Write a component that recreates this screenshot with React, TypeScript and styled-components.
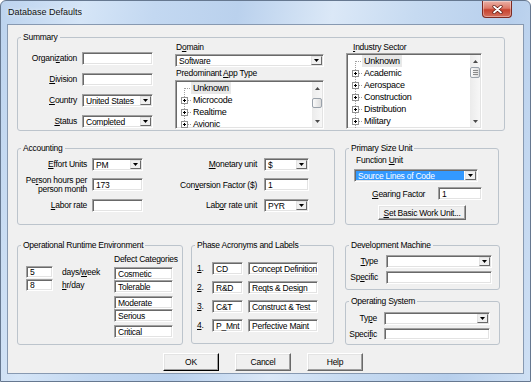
import React from 'react'
import styled, { createGlobalStyle, css } from 'styled-components'

const FONT = `'Liberation Sans', Arial, sans-serif`

const GlobalStyle = createGlobalStyle`
  html, body {
    margin: 0;
    padding: 0;
    background: #ffffff;
  }
  body {
    font-family: ${FONT};
    font-size: 8.5px;
    letter-spacing: -0.25px;
    color: #000;
  }
`

const sunken = css`
  box-sizing: border-box;
  border: 1px solid;
  border-color: #a0a0a0 #ffffff #ffffff #a0a0a0;
  box-shadow: inset 1px 1px 0 #696969, inset -1px -1px 0 #e3e3e3;
  background: #ffffff;
`

const Window = styled.div`
  box-sizing: border-box;
  width: 531px;
  height: 382px;
  display: flex;
  flex-direction: column;
  border: 1px solid #667890;
  border-radius: 6px 6px 0 0;
  overflow: hidden;
  background: linear-gradient(
    100deg,
    #bcd3ee 0%,
    #d5e5f7 14%,
    #c3d8f1 26%,
    #bad1ed 40%,
    #dbe8f7 56%,
    #c6daf1 70%,
    #b7cfec 86%,
    #cfe0f4 100%
  );
`

const TitleBar = styled.div`
  height: 23px;
  display: flex;
  align-items: flex-start;
`

const Title = styled.span`
  flex: 1;
  margin: 6px 0 0 7px;
  font-family: 'Liberation Sans', Arial, sans-serif;
  font-size: 9px;
  letter-spacing: 0;
  line-height: 11px;
  color: #111;
  text-shadow: 0 0 4px rgba(255, 255, 255, 0.9);
`

const CloseButton = styled.div`
  box-sizing: border-box;
  width: 30px;
  height: 17px;
  margin-right: 18px;
  display: flex;
  align-items: center;
  justify-content: center;
  border: 1px solid #7d2a22;
  border-top: none;
  border-radius: 0 0 4px 4px;
  background: linear-gradient(180deg, #eab1a7 0%, #dd7a69 45%, #c7432f 55%, #d4705e 100%);
  box-shadow: inset 0 0 0 1px rgba(255, 255, 255, 0.35);
`

const Client = styled.div`
  flex: 1;
  min-height: 0;
  margin: 0 6px 7px;
  border: 1px solid #8799b1;
  background: #f0f0f0;
  padding: 7px 0 0 9px;
  display: flex;
  flex-direction: column;
`

const Row = styled.div<{ $top?: number; $gap?: number }>`
  display: flex;
  align-items: flex-start;
  margin-top: ${({ $top }) => $top ?? 0}px;
  gap: ${({ $gap }) => $gap ?? 0}px;
`

const Stack = styled.div<{ $gap?: number }>`
  display: flex;
  flex-direction: column;
  gap: ${({ $gap }) => $gap ?? 0}px;
`

const Group = styled.fieldset<{ $w: number; $h: number }>`
  box-sizing: border-box;
  width: ${({ $w }) => $w}px;
  height: ${({ $h }) => $h}px;
  margin: 0;
  padding: 0;
  min-width: 0;
  border: 1px solid #bcc4cc;
  border-radius: 3px;
`

const Legend = styled.legend`
  margin-left: 3px;
  padding: 0 2px;
  line-height: 10px;
  white-space: nowrap;
`

const Caption = styled.div<{ $indent?: number; $top?: number }>`
  line-height: 10px;
  padding-left: ${({ $indent }) => $indent ?? 0}px;
  margin-top: ${({ $top }) => $top ?? 0}px;
  white-space: nowrap;
`

const FieldLabel = styled.div<{ $pr?: number; $lh?: number }>`
  align-self: center;
  text-align: right;
  white-space: nowrap;
  padding-right: ${({ $pr }) => $pr ?? 0}px;
  line-height: ${({ $lh }) => $lh ?? 13}px;
`

const TextBox = styled.div<{ $w?: number; $h?: number }>`
  ${sunken}
  width: ${({ $w }) => ($w ? `${$w}px` : '100%')};
  height: ${({ $h }) => $h ?? 13}px;
  padding: 0 2px 0 3px;
  display: flex;
  align-items: center;
  white-space: nowrap;
  overflow: hidden;
`

const Combo = styled.div<{ $w?: number; $top?: number; $left?: number }>`
  ${sunken}
  width: ${({ $w }) => ($w ? `${$w}px` : '100%')};
  height: 13px;
  margin-top: ${({ $top }) => $top ?? 0}px;
  margin-left: ${({ $left }) => $left ?? 0}px;
  padding: 1px;
  display: flex;
`

const ComboValue = styled.div<{ $selected?: boolean }>`
  flex: 1;
  display: flex;
  align-items: center;
  padding-left: 2px;
  margin-right: 1px;
  white-space: nowrap;
  overflow: hidden;
  background: ${({ $selected }) => ($selected ? '#3399ff' : 'transparent')};
  color: ${({ $selected }) => ($selected ? '#ffffff' : '#000')};
`

const DropButton = styled.div`
  box-sizing: border-box;
  width: 11px;
  display: flex;
  align-items: center;
  justify-content: center;
  border: 1px solid;
  border-color: #e3e3e3 #696969 #696969 #e3e3e3;
  background: #f0f0f0;
`

const ListBox = styled.div<{ $h: number; $top?: number }>`
  ${sunken}
  height: ${({ $h }) => $h}px;
  margin-top: ${({ $top }) => $top ?? 0}px;
  padding: 0 1px;
  display: flex;
  overflow: hidden;
`

const TreeList = styled.div<{ $pad: number }>`
  flex: 1;
  overflow: hidden;
  padding-top: ${({ $pad }) => $pad}px;
`

const TreeRow = styled.div`
  display: flex;
  align-items: center;
  height: 12px;
  white-space: nowrap;
`

const TreeText = styled.span<{ $focus?: boolean }>`
  padding: 0 2px;
  line-height: 12px;
  font-size: 9px;
  background: ${({ $focus }) => ($focus ? '#e8e8e8' : 'transparent')};
`

const ScrollBar = styled.div`
  width: 10px;
  margin: 1px 0;
  display: flex;
  flex-direction: column;
  background: linear-gradient(90deg, #ebebeb, #f7f7f7);
`

const ScrollArrow = styled.div`
  height: 12px;
  display: flex;
  align-items: center;
  justify-content: center;
`

const ScrollThumb = styled.div<{ $top: number; $h: number }>`
  box-sizing: border-box;
  margin-top: ${({ $top }) => $top}px;
  height: ${({ $h }) => $h}px;
  border: 1px solid #9aa2ab;
  border-radius: 2px;
  background: linear-gradient(90deg, #fafafa, #dcdcdc);
  display: flex;
  align-items: center;
  justify-content: center;
`

const ScrollTrack = styled.div`
  flex: 1;
`

const PushButton = styled.div<{ $w: number; $h: number; $default?: boolean }>`
  box-sizing: border-box;
  width: ${({ $w }) => $w}px;
  height: ${({ $h }) => $h}px;
  display: flex;
  align-items: center;
  justify-content: center;
  background: #f0f0f0;
  border: 1px solid;
  border-color: #ffffff ${({ $default }) => ($default ? '#000' : '#696969')}
    ${({ $default }) => ($default ? '#000' : '#696969')} #ffffff;
  box-shadow: inset -1px -1px 0 #a0a0a0, inset 1px 1px 0 #e3e3e3;
  white-space: nowrap;
`

/* Summary */
const SummaryGrid = styled.div`
  display: grid;
  grid-template-columns: 135px 149px 136px;
  column-gap: 22px;
`

const LabeledFields = styled.div<{ $cols: string; $rows: string; $rowGap: number; $top: number }>`
  display: grid;
  grid-template-columns: ${({ $cols }) => $cols};
  grid-template-rows: ${({ $rows }) => $rows};
  row-gap: ${({ $rowGap }) => $rowGap}px;
  column-gap: 0;
  padding-top: ${({ $top }) => $top}px;
`

/* Primary size unit */
const SizeBody = styled.div`
  display: flex;
  flex-direction: column;
  padding-top: 2px;
`

const GearRow = styled.div`
  display: flex;
  align-items: center;
  height: 13px;
  margin-top: 5px;
  padding: 0 16px 0 26px;
`

const Push = styled.div`
  margin-top: 5px;
  align-self: center;
`

/* Runtime environment */
const RuntimeBody = styled.div`
  display: flex;
`

const RuntimeLeft = styled.div`
  width: 96px;
  padding: 16px 0 0 8px;
  box-sizing: border-box;
  display: flex;
  flex-direction: column;
  gap: 1px;
`

const RuntimeRow = styled.div`
  display: flex;
  align-items: center;
  gap: 9px;
`

const DefectCol = styled.div`
  width: 59px;
  display: flex;
  flex-direction: column;
`

const DefectStack = styled.div<{ $top: number }>`
  display: flex;
  flex-direction: column;
  margin-top: ${({ $top }) => $top}px;
`

/* Phases */
const PhaseGrid = styled.div`
  display: grid;
  grid-template-columns: 10px 31px 70px;
  grid-auto-rows: 13px;
  column-gap: 5px;
  row-gap: 6px;
  padding: 12px 0 0 5px;
`

const PhaseNum = styled.div`
  align-self: center;
  line-height: 13px;
`

const ButtonBar = styled.div`
  display: flex;
  gap: 16px;
  margin-top: 8px;
  padding-left: 146px;
`

const Arrow = ({ up }: { up?: boolean }) => (
  <svg width="5" height="3" viewBox="0 0 5 3">
    <path d={up ? 'M0 3 L2.5 0 L5 3 Z' : 'M0 0 L5 0 L2.5 3 Z'} fill="#4a4a4a" />
  </svg>
)

const DropArrow = () => (
  <svg width="5" height="3" viewBox="0 0 5 3">
    <path d="M0 0 L5 0 L2.5 3 Z" fill="#000" />
  </svg>
)

const Grip = () => (
  <svg width="5" height="5" viewBox="0 0 5 5" shapeRendering="crispEdges">
    <path d="M0 0.5 H5 M0 2.5 H5 M0 4.5 H5" stroke="#8a8a8a" />
  </svg>
)

const Connector = ({ root }: { root?: boolean }) => (
  <svg width="14" height="12" viewBox="0 0 14 12" shapeRendering="crispEdges">
    <line x1="7.5" y1={root ? 6 : 0} x2="7.5" y2="12" stroke="#a0a0a0" strokeDasharray="1 1" />
    <line x1={root ? 7.5 : 11} y1="6.5" x2="14" y2="6.5" stroke="#a0a0a0" strokeDasharray="1 1" />
    {!root && (
      <>
        <rect x="4.5" y="3.5" width="6" height="6" fill="#fff" stroke="#919191" />
        <line x1="6" y1="6.5" x2="9" y2="6.5" stroke="#000" />
        <line x1="7.5" y1="5" x2="7.5" y2="8" stroke="#000" />
      </>
    )}
  </svg>
)

const ComboBox = ({
  value,
  w,
  top,
  left,
  selected,
}: {
  value?: string
  w?: number
  top?: number
  left?: number
  selected?: boolean
}) => (
  <Combo $w={w} $top={top} $left={left}>
    <ComboValue $selected={selected}>{value}</ComboValue>
    <DropButton>
      <DropArrow />
    </DropButton>
  </Combo>
)

const TreeBox = ({
  items,
  h,
  top,
  pad,
  thumbTop,
  thumbH,
  grip,
}: {
  items: string[]
  h: number
  top?: number
  pad: number
  thumbTop: number
  thumbH: number
  grip?: boolean
}) => (
  <ListBox $h={h} $top={top}>
    <TreeList $pad={pad}>
      {items.map((item, idx) => (
        <TreeRow key={item}>
          <Connector root={idx === 0} />
          <TreeText $focus={idx === 0}>{item}</TreeText>
        </TreeRow>
      ))}
    </TreeList>
    <ScrollBar>
      <ScrollArrow>
        <Arrow up />
      </ScrollArrow>
      <ScrollThumb $top={thumbTop} $h={thumbH}>
        {grip && <Grip />}
      </ScrollThumb>
      <ScrollTrack />
      <ScrollArrow>
        <Arrow />
      </ScrollArrow>
    </ScrollBar>
  </ListBox>
)

const domainItems = ['Unknown', 'Microcode', 'Realtime', 'Avionic']
const industryItems = [
  'Unknown',
  'Academic',
  'Aerospace',
  'Construction',
  'Distribution',
  'Military',
  'Electronics',
]

const phases = [
  { n: '1', acr: 'CD', label: 'Concept Definition' },
  { n: '2', acr: 'R&D', label: 'Reqts & Design' },
  { n: '3', acr: 'C&T', label: 'Construct & Test' },
  { n: '4', acr: 'P_Mnt', label: 'Perfective Maint' },
]

export default function App() {
  return (
    <>
      <GlobalStyle />
      <Window>
        <TitleBar>
          <Title>Database Defaults</Title>
          <CloseButton>
            <svg width="11" height="9" viewBox="0 0 11 9">
              <path d="M2 1.5 L9 7.5 M9 1.5 L2 7.5" stroke="#5b1810" strokeWidth="3.2" strokeLinecap="round" />
              <path d="M2 1.5 L9 7.5 M9 1.5 L2 7.5" stroke="#ffffff" strokeWidth="1.8" strokeLinecap="round" />
            </svg>
          </CloseButton>
        </TitleBar>

        <Client>
          <Group $w={488} $h={99}>
            <Legend>Summary</Legend>
            <SummaryGrid>
              <LabeledFields $cols="64px 71px" $rows="13px 13px 13px 13px" $rowGap={8} $top={10}>
                <FieldLabel $pr={5}>
                  Organi<u>z</u>ation
                </FieldLabel>
                <TextBox />
                <FieldLabel $pr={5}>
                  <u>D</u>ivision
                </FieldLabel>
                <TextBox />
                <FieldLabel $pr={5}>
                  <u>C</u>ountry
                </FieldLabel>
                <ComboBox value="United States" />
                <FieldLabel $pr={5}>
                  <u>S</u>tatus
                </FieldLabel>
                <ComboBox value="Completed" />
              </LabeledFields>

              <Stack>
                <Caption $indent={1}>
                  D<u>o</u>main
                </Caption>
                <ComboBox value="Software" top={2} />
                <Caption $indent={1} $top={1}>
                  Predominant <u>A</u>pp Type
                </Caption>
                <TreeBox items={domainItems} h={49} top={2} pad={1} thumbTop={4} thumbH={10} />
              </Stack>

              <Stack>
                <Caption $indent={7}>
                  <u>I</u>ndustry Sector
                </Caption>
                <TreeBox items={industryItems} h={76} top={1} pad={1} thumbTop={0} thumbH={11} grip />
              </Stack>
            </SummaryGrid>
          </Group>

          <Row $top={12} $gap={10}>
            <Group $w={318} $h={82}>
              <Legend>Accounting</Legend>
              <LabeledFields $cols="74px 51px 121px 45px" $rows="13px 14px 13px" $rowGap={7} $top={5}>
                <FieldLabel $pr={5}>
                  <u>E</u>ffort Units
                </FieldLabel>
                <ComboBox value="PM" />
                <FieldLabel $pr={7}>
                  <u>M</u>onetary unit
                </FieldLabel>
                <ComboBox value="$" />

                <FieldLabel $pr={5} $lh={9.5}>
                  Pe<u>r</u>son hours per
                  <br />
                  person month
                </FieldLabel>
                <TextBox>173</TextBox>
                <FieldLabel $pr={7}>
                  Con<u>v</u>ersion Factor ($)
                </FieldLabel>
                <TextBox>1</TextBox>

                <FieldLabel $pr={5}>
                  <u>L</u>abor rate
                </FieldLabel>
                <TextBox />
                <FieldLabel $pr={7}>
                  Lab<u>o</u>r rate unit
                </FieldLabel>
                <ComboBox value="PYR" />
              </LabeledFields>
            </Group>

            <Group $w={154} $h={82}>
              <Legend>Primary Size Unit</Legend>
              <SizeBody>
                <Caption $indent={10}>
                  Function <u>U</u>nit
                </Caption>
                <ComboBox value="Source Lines of Code" w={124} top={4} left={8} selected />
                <GearRow>
                  <span>
                    <u>G</u>earing Factor
                  </span>
                  <TextBox $w={44} style={{ marginLeft: 'auto' }}>
                    1
                  </TextBox>
                </GearRow>
                <Push>
                  <PushButton $w={88} $h={15}>
                    <span>
                      <u>S</u>et Basic Work Unit...
                    </span>
                  </PushButton>
                </Push>
              </SizeBody>
            </Group>
          </Row>

          <Row $top={15} $gap={11}>
            <Row $gap={8}>
              <Group $w={166} $h={105}>
                <Legend>Operational Runtime Environment</Legend>
                <RuntimeBody>
                  <RuntimeLeft>
                    <RuntimeRow>
                      <TextBox $w={27} $h={12}>
                        5
                      </TextBox>
                      <span>
                        days/<u>w</u>eek
                      </span>
                    </RuntimeRow>
                    <RuntimeRow>
                      <TextBox $w={27} $h={12}>
                        8
                      </TextBox>
                      <span>
                        <u>h</u>r/day
                      </span>
                    </RuntimeRow>
                  </RuntimeLeft>
                  <DefectCol>
                    <Caption $top={4}>Defect Categories</Caption>
                    <DefectStack $top={3}>
                      <TextBox>Cosmetic</TextBox>
                      <TextBox>Tolerable</TextBox>
                    </DefectStack>
                    <DefectStack $top={3}>
                      <TextBox>Moderate</TextBox>
                      <TextBox>Serious</TextBox>
                    </DefectStack>
                    <DefectStack $top={3}>
                      <TextBox>Critical</TextBox>
                    </DefectStack>
                  </DefectCol>
                </RuntimeBody>
              </Group>

              <Group $w={143} $h={104}>
                <Legend>Phase Acronyms and Labels</Legend>
                <PhaseGrid>
                  {phases.map((p) => (
                    <React.Fragment key={p.n}>
                      <PhaseNum>
                        <u>{p.n}</u>.
                      </PhaseNum>
                      <TextBox>{p.acr}</TextBox>
                      <TextBox>{p.label}</TextBox>
                    </React.Fragment>
                  ))}
                </PhaseGrid>
              </Group>
            </Row>

            <Stack $gap={6}>
              <Group $w={155} $h={50}>
                <Legend>Development Machine</Legend>
                <LabeledFields $cols="40px 106px" $rows="13px 13px" $rowGap={3} $top={5}>
                  <FieldLabel $pr={8}>
                    <u>T</u>ype
                  </FieldLabel>
                  <ComboBox />
                  <FieldLabel $pr={8}>
                    Sp<u>e</u>cific
                  </FieldLabel>
                  <TextBox />
                </LabeledFields>
              </Group>
              <Group $w={155} $h={49}>
                <Legend>Operating System</Legend>
                <LabeledFields $cols="38px 106px" $rows="12px 12px" $rowGap={4} $top={6}>
                  <FieldLabel $pr={7} $lh={12}>
                    Ty<u>p</u>e
                  </FieldLabel>
                  <ComboBox />
                  <FieldLabel $pr={7} $lh={12}>
                    Speci<u>f</u>ic
                  </FieldLabel>
                  <TextBox $h={12} />
                </LabeledFields>
              </Group>
            </Stack>
          </Row>

          <ButtonBar>
            <PushButton $w={56} $h={18} $default>
              OK
            </PushButton>
            <PushButton $w={56} $h={18}>
              Cancel
            </PushButton>
            <PushButton $w={56} $h={18}>
              Help
            </PushButton>
          </ButtonBar>
        </Client>
      </Window>
    </>
  )
}
